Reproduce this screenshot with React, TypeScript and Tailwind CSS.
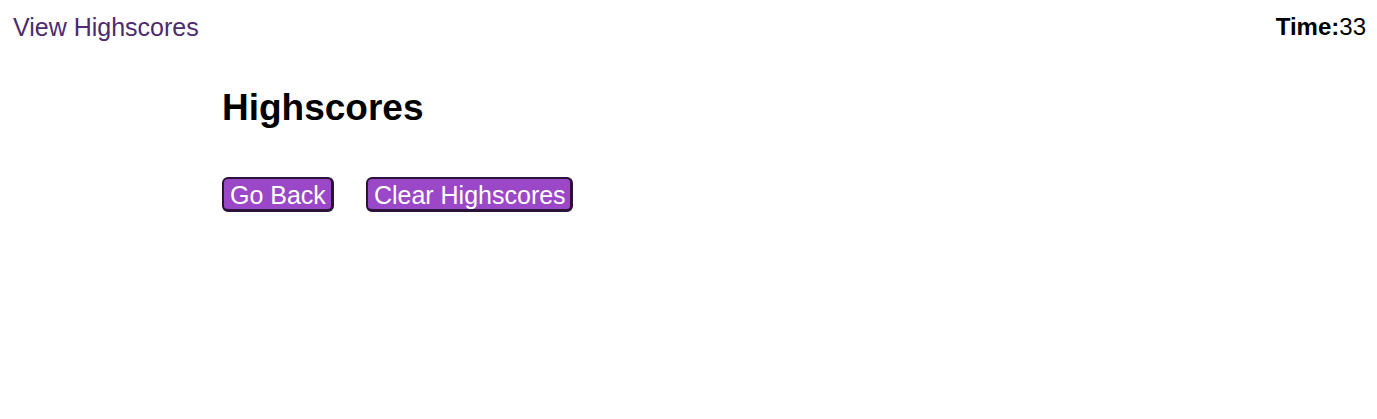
import React from 'react';

export default function App() {
  return (
    <div className="min-h-screen w-full bg-white text-black" style={{ fontFamily: '"Liberation Sans", Arial, sans-serif' }}>
      <header className="flex justify-between items-center pl-[13px] pr-[11px] pt-[13px]">
        <a href="#" className="text-[25px] leading-[28px] text-[#4e2a6f]">View Highscores</a>
        <div className="text-[24px] leading-[28px]">
          <span className="font-bold">Time:</span>33
        </div>
      </header>
      <main className="pl-[222px] pt-[46px]">
        <h1 className="text-[37px] leading-[42px] font-bold">Highscores</h1>
        <div className="flex gap-[32px] mt-[48px]">
          <button className="text-[25px] leading-[28px] text-white bg-[#9a48c8] border-2 border-r-[3px] border-b-[3px] border-[#2a1238] rounded-[6px] pl-[6px] pr-[5px] pt-[2px] pb-0">Go Back</button>
          <button className="text-[25px] leading-[28px] text-white bg-[#9a48c8] border-2 border-r-[3px] border-b-[3px] border-[#2a1238] rounded-[6px] pl-[6px] pr-[4px] pt-[2px] pb-0">Clear Highscores</button>
        </div>
      </main>
    </div>
  );
}
